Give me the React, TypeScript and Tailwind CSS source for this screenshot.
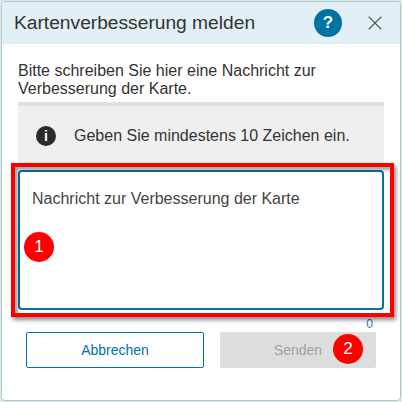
import React from 'react';
import { X } from 'lucide-react';

function Badge({ n, className }: { n: number; className: string }) {
  return (
    <div
      className={`absolute w-[30px] h-[30px] rounded-full bg-[#fe0000] text-white text-[17px] flex items-center justify-center ${className}`}
    >
      {n}
    </div>
  );
}

export default function App() {
  return (
    <div className="relative w-[402px] h-[402px] overflow-hidden p-[1px] bg-[#e6e6da] font-['Liberation_Sans',Arial,sans-serif]">
      <div className="w-[400px] h-[400px] flex flex-col rounded-[4px] bg-white overflow-hidden border border-[#a6cbdb]">
        {/* Header */}
        <div className="h-[42px] shrink-0 flex items-center pl-[12px] bg-[#e2eff5] text-[#333333]">
          <span className="text-[19.2px]">Kartenverbesserung melden</span>
          <div className="ml-auto mr-[21px] w-[28px] h-[28px] rounded-full bg-[#0073a5] text-white text-[17px] font-bold flex items-center justify-center">
            ?
          </div>
          <button className="mr-[13px] text-[#555555]">
            <X size={24} strokeWidth={1.1} />
          </button>
        </div>

        {/* Body */}
        <div className="flex-1 flex flex-col px-[16px] pt-[18px]">
          <p className="text-[16px] leading-[18px] text-[#333333]">
            Bitte schreiben Sie hier eine Nachricht zur Verbesserung der Karte.
          </p>
          <div className="mt-[4px] h-[64px] shrink-0 flex items-center border-t-[4px] border-[#e0e0e0] bg-[#efefef] pl-[18px] text-[16px] text-[#333333]">
            <div className="w-[20px] h-[20px] rounded-full bg-[#2b2b2b] text-white text-[14px] font-bold flex items-center justify-center">
              i
            </div>
            <span className="ml-[18px]">Geben Sie mindestens 10 Zeichen ein.</span>
          </div>
          <div className="mt-[4px] h-[140px] shrink-0 rounded-[4px] border-2 border-[#0073a5] pl-[12px] pt-[18px] text-[16px] leading-[18px] text-[#444444]">
            Nachricht zur Verbesserung der Karte
          </div>
          <div className="h-[12px] mt-[8px] text-right pr-[11px] text-[12px] leading-[12px] text-[#2a7fae]">0</div>
          <div className="flex justify-between px-[8px] mt-[2px]">
            <button className="w-[178px] h-[36px] rounded-[2px] border border-[#0073a5] text-[#0073a5] text-[14px]">
              Abbrechen
            </button>
            <button className="w-[156px] h-[36px] rounded-[2px] bg-[#dedede] text-[#a0a0a0] text-[14px]">
              Senden
            </button>
          </div>
        </div>
      </div>

      {/* Annotations over the dialog */}
      <div className="absolute left-[11px] top-[163px] w-[383px] h-[154px] border-[4px] border-[#fe0000] shadow-[2px_3px_4px_rgba(0,0,0,0.45),inset_3px_3px_3px_rgba(0,0,0,0.35)]" />
      <Badge n={1} className="left-[24px] top-[232px]" />
      <Badge n={2} className="left-[333px] top-[334px]" />
    </div>
  );
}
